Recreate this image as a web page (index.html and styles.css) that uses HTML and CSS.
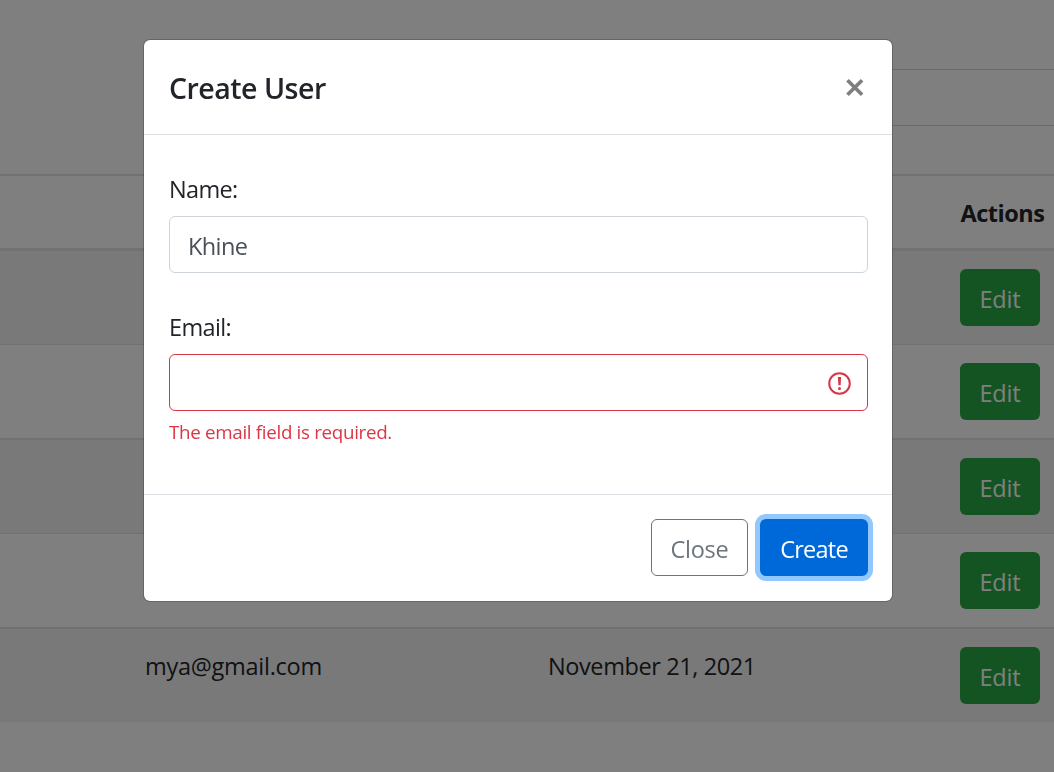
FILE: index.html
```html
<!DOCTYPE html>
<html lang="en">
<head>
<meta charset="utf-8">
<title>Users</title>
<link rel="stylesheet" href="styles.css">
</head>
<body>
<main class="page">
  <div class="toolbar"><div class="search"></div></div>
  <div class="table">
    <div class="row head"><span></span><span></span><span></span><strong class="actions">Actions</strong></div>
    <div class="row odd first"><span></span><span></span><span></span><button class="btn edit"><span class="edit-text">Edit</span></button></div>
    <div class="row"><span></span><span></span><span></span><button class="btn edit"><span class="edit-text">Edit</span></button></div>
    <div class="row odd thick"><span></span><span></span><span></span><button class="btn edit"><span class="edit-text">Edit</span></button></div>
    <div class="row"><span></span><span></span><span></span><button class="btn edit"><span class="edit-text">Edit</span></button></div>
    <div class="row odd thick"><span></span><span class="mail">mya@gmail.com</span><span class="date">November 21, 2021</span><button class="btn edit"><span class="edit-text">Edit</span></button></div>
  </div>
</main>
<div class="backdrop">
  <section class="modal" role="dialog" aria-label="Create User">
    <header class="modal-header">
      <h1 class="title"><span class="title-text">Create User</span></h1>
      <svg class="close" width="20" height="20" viewBox="0 0 20 20" aria-label="Close"><path d="M2.5 2.2 17.1 16.8M17.1 2.2 2.5 16.8" fill="none" stroke="#7f7f7f" stroke-width="3.7"/></svg>
    </header>
    <div class="modal-body">
      <div class="label"><span class="name-text">Name:</span></div>
      <div class="input"><span class="value">Khine</span></div>
      <div class="label second"><span class="email-text">Email:</span></div>
      <div class="input invalid">
        <svg class="alert" width="24" height="24" viewBox="0 0 24 24"><circle cx="12.5" cy="12.5" r="10.3" fill="none" stroke="#dc3545" stroke-width="2"/><path d="M10.9 6h3.2l-.5 8.3h-2.2z" fill="#dc3545"/><circle cx="12.5" cy="17.4" r="1.5" fill="#dc3545"/></svg>
      </div>
      <div class="error"><span class="error-text">The email field is required.</span></div>
    </div>
    <footer class="modal-footer">
      <button class="btn cancel"><span class="close-text">Close</span></button>
      <button class="btn create"><span class="create-text">Create</span></button>
    </footer>
  </section>
</div>
</body>
</html>
```
FILE: styles.css
```css
* { box-sizing: border-box; }
body {
  margin: 0;
  overflow: hidden;
  background: #fff;
  color: #212529;
  font: 23.5px/36px "Open Sans", "Noto Sans", sans-serif;
}
span, strong { white-space: nowrap; }
.page { height: 772px; overflow: hidden; }
.toolbar { height: 174px; padding: 69px 0 0 600px; }
.search { height: 57px; border: 1px solid #ced4da; border-right: 0; border-radius: 6px 0 0 6px; }
.row {
  display: grid;
  grid-template-columns: 127px 403px 412px 112px;
  height: 94px;
  border-top: 1px solid #dee2e6;
  align-items: start;
}
.row > * { margin: 19px 0 0 18px; }
.row > .btn { margin-top: 18px; }
.head { height: 74px; border-top-width: 2px; }
.first { height: 96px; border-top-width: 3px; }
.thick { height: 95px; border-top-width: 2px; }
.odd { background: #f2f2f2; }
.actions { letter-spacing: -.5px; padding-left: .5px; }
.mail { letter-spacing: -.27px; }
.date { letter-spacing: -.4px; }
.btn {
  height: 57px;
  padding: 2px 0 0;
  border: 1px solid transparent;
  border-radius: 6px;
  font: inherit;
  text-align: center;
}
.edit { width: 80px; background: #28a745; color: #fff; }
.edit-text { letter-spacing: -.2px; }
.backdrop {
  position: fixed;
  inset: 0;
  padding: 39px 0 0 143px;
  background: rgba(0, 0, 0, .5);
}
.modal {
  width: 750px;
  height: 563px;
  background: #fff;
  background-clip: padding-box;
  border: 1px solid rgba(0, 0, 0, .2);
  border-radius: 7px;
}
.modal-header {
  display: flex;
  justify-content: space-between;
  height: 95px;
  padding: 26px 27px 0 25px;
  border-bottom: 1px solid #dee2e6;
}
.title { margin: 0; font-size: 28.5px; line-height: 45px; font-weight: 600; letter-spacing: -.5px; }
.close { margin-top: 12px; }
.modal-body { height: 359px; padding: 36px 24px 0 25px; }
.label { height: 45px; letter-spacing: -.65px; }
.second { margin-top: 36px; }
.input {
  display: flex;
  align-items: center;
  height: 57px;
  padding: 3px 18px 0;
  border: 1px solid #ced4da;
  border-radius: 6px;
  color: #495057;
}
.value { letter-spacing: -.6px; }
.invalid { justify-content: flex-end; padding: 0 16px 0 18px; border-color: #dc3545; }
.alert { margin-top: 1px; }
.error { margin-top: 6px; color: #dc3545; font-size: 18.8px; line-height: 30px; letter-spacing: -.32px; }
.modal-footer {
  display: flex;
  justify-content: flex-end;
  gap: 12px;
  height: 107px;
  padding: 24px 24px 0;
  border-top: 1px solid #dee2e6;
}
.cancel { width: 97px; background: #fff; color: #6c757d; border-color: #6c757d; }
.close-text { letter-spacing: -.3px; }
.create { width: 108px; background: #0069d9; color: #fff; box-shadow: 0 0 0 5px #92c7ff; }
.create-text { font-weight: 500; letter-spacing: -.75px; }
```
